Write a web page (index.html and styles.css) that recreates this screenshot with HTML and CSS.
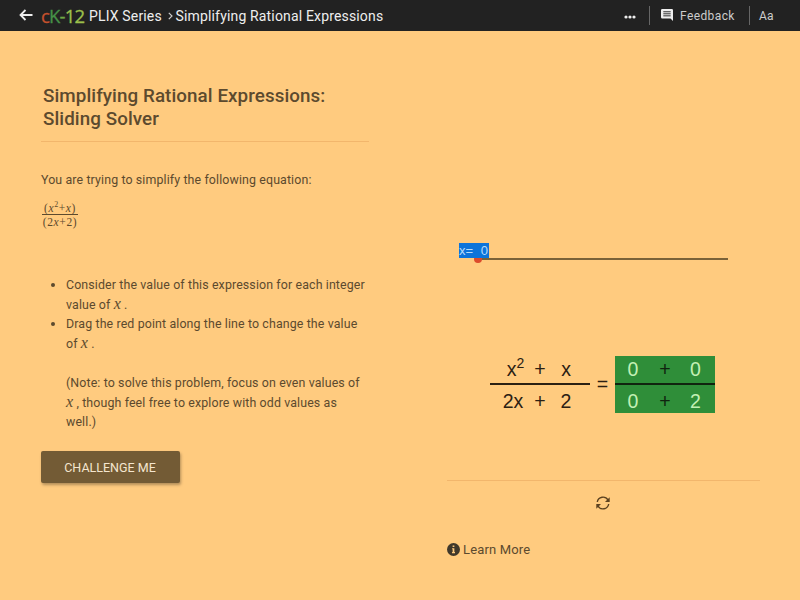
FILE: index.html
```html
<!DOCTYPE html>
<html lang="en">
<head>
    <meta charset="UTF-8" />
    <title>PLIX Series - Simplifying Rational Expressions</title>
    <link rel="stylesheet" href="styles.css">
</head>
<body>
    <header class="topbar">
        <svg class="back" viewBox="0 0 14 12"><path d="M13.5 6H1.5M6.5 1L1.500 6l5 5" /></svg>
        <span class="logo"><span class="logo-c">c</span><span class="logo-k">K</span><span class="logo-dash">-</span><span class="logo-num">12</span></span>
        <span class="series">PLIX Series</span>
        <svg class="chevron" viewBox="0 0 5 8"><path d="M0.8 0.8L4 4L0.8 7.2" /></svg>
        <span class="lesson">Simplifying Rational Expressions</span>
        <div class="tools">
            <svg class="dots" viewBox="0 0 12 4"><circle cx="2" cy="2" r="1.6" /><circle cx="6" cy="2" r="1.6" /><circle cx="10" cy="2" r="1.6" /></svg>
            <span class="sep"></span>
            <svg class="chat" viewBox="0 0 13 13"><path fill="#eee" d="M1.3 0h10.4q1.3 0 1.3 1.3V13l-2.7-2.7h-9Q0 10.300 0 9V1.300Q0 0 1.300 0z" /><path stroke="#222" stroke-width="1" d="M2.500 3h8M2.500 5.200h8M2.500 7.400h8" /></svg>
            <span class="feedback">Feedback</span>
            <span class="sep"></span>
            <span class="text-size">Aa</span>
        </div>
    </header>

    <main class="content">
        <section class="lesson-pane">
            <h1>Simplifying Rational Expressions:<br>Sliding Solver</h1>
            <p class="intro">You are trying to simplify the following equation:</p>
            <div class="formula">
                <span class="formula-top">(<i>x</i><sup>2</sup>+<i>x</i>)</span>
                <span class="formula-bottom">(2<i>x</i>+2)</span>
            </div>
            <ul class="steps">
                <li>Consider the value of this expression for each integer<br>value of <i>x</i> .</li>
                <li>Drag the red point along the line to change the value<br>of <i>x</i> .<br><br>(Note: to solve this problem, focus on even values of<br><i>x</i> , though feel free to explore with odd values as<br>well.)</li>
            </ul>
            <button class="challenge" type="button">CHALLENGE ME</button>
        </section>

        <section class="plix-pane">
            <div class="slider">
                <div class="track"></div>
                <div class="point"></div>
                <div class="value">x=&nbsp; 0</div>
            </div>
            <div class="equation">
                <div class="fraction">
                    <div class="row"><span class="squared">x<sup>2</sup></span><span>+</span><span>x</span></div>
                    <div class="row"><span class="double">2x</span><span>+</span><span>2</span></div>
                </div>
                <div class="equals">=</div>
                <div class="fraction answer">
                    <div class="row"><span>0</span><span class="plus">+</span><span>0</span></div>
                    <div class="row"><span>0</span><span class="plus">+</span><span>2</span></div>
                </div>
            </div>
            <div class="reset">
                <svg viewBox="0 0 14 14"><path class="arc" d="M1.300 6A5.800 5.800 0 0 1 12 4M12.700 8A5.800 5.800 0 0 1 2 10" /><path d="M13.700 1.300V6H9zM0.300 12.700V8H5z" /></svg>
            </div>
            <div class="learn">
                <svg viewBox="0 0 12 12"><circle cx="6" cy="6" r="6" /><path fill="#ffcb7f" d="M5.200 2.200h1.600v1.500H5.200zM4.700 4.800h2.100v3.600h.6v1H4.600v-1h.6V5.800h-.5z" /></svg>
                <span>Learn More</span>
            </div>
        </section>
    </main>
</body>
</html>
```

FILE: styles.css
```css
body {
    margin: 0;
    width: 800px;
    height: 600px;
    overflow: hidden;
    background: #ffcb7f;
    color: #5c4a2e;
    font-family: Roboto, sans-serif;
    font-size: 12.4px;
    letter-spacing: 0.12px;
}
svg {
    display: block;
    flex: none;
}
.topbar {
    display: flex;
    align-items: center;
    box-sizing: border-box;
    height: 31px;
    padding-left: 19px;
    background: #222;
    color: #eee;
    font-size: 14px;
    white-space: nowrap;
}
.back {
    width: 14px;
    height: 12px;
    margin-bottom: 1px;
    fill: none;
    stroke: #eee;
    stroke-width: 1.8;
}
.logo {
    width: 43px;
    margin-left: 8px;
    padding-bottom: 1px;
    font-family: "Open Sans", sans-serif;
    font-size: 18.5px;
    letter-spacing: -0.8px;
    -webkit-text-stroke: 0.3px;
}
.logo-c { color: #c4512d; }
.logo-k { color: #459047; }
.logo-dash { color: #6fa844; }
.logo-num { color: #9cc04c; }
.series {
    width: 73px;
    margin-left: 5px;
}
.series,
.lesson {
    letter-spacing: 0.16px;
}
.chevron {
    width: 5px;
    height: 8px;
    margin: 1px 3px 0 5.5px;
    fill: none;
    stroke: #ccc;
    stroke-width: 1.2;
}
.tools {
    display: flex;
    align-items: center;
    margin-left: auto;
    padding-right: 26px;
    color: #ccc;
    font-size: 12px;
}
.dots {
    width: 12px;
    height: 4px;
    margin: 2px 13px 0 0;
    fill: #eee;
}
.sep {
    width: 1px;
    height: 19px;
    background: #666;
}
.chat {
    width: 12px;
    height: 12px;
    margin: 0 7px 1px 11px;
}
.feedback {
    width: 55px;
    margin-right: 14px;
    letter-spacing: 0.4px;
}
.text-size {
    width: 15px;
    margin-left: 9px;
}
.content {
    display: flex;
}
.lesson-pane {
    width: 328px;
    padding: 54px 0 0 41px;
}
h1 {
    margin: 0;
    padding: 0 0 11px 2px;
    border-bottom: 1px solid #f2b66c;
    font-size: 18.8px;
    font-weight: 500;
    letter-spacing: 0.08px;
    line-height: 22.5px;
    white-space: nowrap;
}
.intro {
    margin: 27px 0 0;
    line-height: 21px;
    white-space: nowrap;
}
.formula {
    display: inline-flex;
    flex-direction: column;
    width: 36px;
    margin: 12px 0 0 1px;
    font-family: "Liberation Serif", serif;
    font-size: 11.5px;
    letter-spacing: 0.6px;
    line-height: 13px;
    text-align: center;
    white-space: nowrap;
    vertical-align: top;
}
.formula-top {
    height: 12px;
    line-height: 12px;
    border-bottom: 1px solid #5c4a2e;
}
.formula-bottom {
    height: 14px;
    line-height: 15px;
}
.formula sup {
    font-size: 8px;
    line-height: 0;
}
.steps {
    margin: 46px 0 0;
    padding-left: 25px;
    line-height: 19.6px;
    white-space: nowrap;
}
.steps i {
    font-family: "Liberation Serif", serif;
    font-size: 16px;
    line-height: 0;
}
.challenge {
    display: block;
    width: 139px;
    height: 32px;
    margin-top: 19px;
    padding: 1px 1px 0 0;
    border: 0;
    border-radius: 2px;
    background: #735b35;
    box-shadow: 1px 2px 3px rgba(0, 0, 0, 0.3);
    color: #f5e6cf;
    font-family: Roboto, sans-serif;
    font-size: 12.5px;
}
.plix-pane {
    width: 313px;
    margin-left: 78px;
    padding-top: 211px;
}
.slider {
    position: relative;
    width: 269px;
    height: 20px;
    margin-left: 12px;
}
.track {
    margin-left: 18px;
    padding-top: 16px;
    border-bottom: 2px solid #7a6238;
}
/* the label sits over the top half of the point */
.point {
    position: absolute;
    left: 15px;
    top: 13px;
    width: 8px;
    height: 8px;
    border-radius: 50%;
    background: #dc4b2c;
}
.value {
    position: absolute;
    left: 0;
    top: 1px;
    width: 30px;
    height: 15px;
    background: #0d74da;
    color: #b9dcfa;
    font: 13px/16px "Liberation Sans", sans-serif;
    white-space: nowrap;
}
.equation {
    display: flex;
    margin: 94px 0 0 43px;
    color: #2b2013;
    font: 19.5px/27px "Liberation Sans", sans-serif;
    letter-spacing: 0;
}
.fraction {
    width: 100px;
}
.row {
    display: grid;
    grid-template-columns: 26px 26px 26px;
    height: 27px;
    padding-left: 11px;
    text-align: center;
}
.row:first-child {
    border-bottom: 2px solid #2b2013;
}
.row:last-child {
    line-height: 33px;
}
.squared {
    padding-left: 3px;
}
.squared sup {
    font-size: 14px;
    line-height: 0;
    vertical-align: 8px;
}
.double {
    padding-right: 2px;
}
.equals {
    width: 25px;
    line-height: 57px;
    text-align: center;
}
.answer {
    background: #2f8e39;
    color: #c3f0b4;
}
.answer .row {
    grid-template-columns: 32px 32px 29px;
    padding-left: 2px;
}
.answer .row:first-child {
    border-color: #10240f;
}
.answer .plus {
    color: #10240f;
}
.reset {
    margin-top: 67px;
    padding-top: 15px;
    border-top: 1px solid #f2b66c;
}
.reset svg {
    width: 14px;
    height: 14px;
    margin: 0 auto;
    padding-right: 1px;
    fill: #5c4220;
}
.arc {
    fill: none;
    stroke: #5c4220;
    stroke-width: 1.4;
}
.learn {
    display: flex;
    align-items: center;
    margin-top: 32px;
    font-size: 13px;
    letter-spacing: 0.15px;
}
.learn svg {
    width: 13px;
    height: 13px;
    margin: 0 3px 1px 0;
    fill: #40382b;
}
```
